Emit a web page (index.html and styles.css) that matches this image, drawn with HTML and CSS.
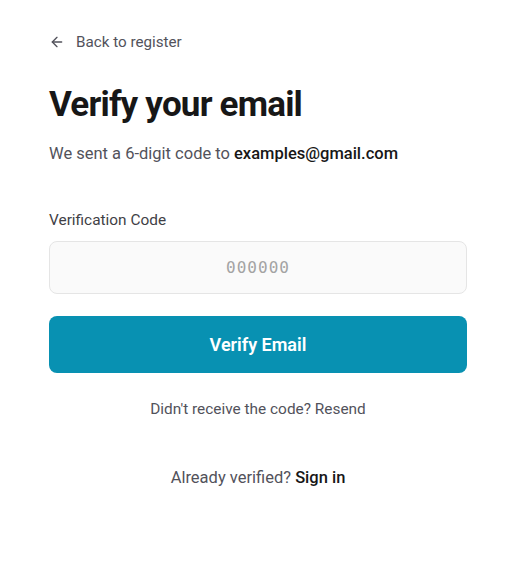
FILE: index.html
```html
<!DOCTYPE html>
<html>
<head>
<meta charset="utf-8">
<link rel="stylesheet" href="styles.css">
</head>
<body>
<main class="page">
  <a class="back" href="#">
    <svg class="back-icon" width="16" height="16" viewBox="0 0 24 24" fill="none" stroke="currentColor" stroke-width="2" stroke-linecap="round" stroke-linejoin="round"><path d="M19 12H5"/><path d="M12 19l-7-7 7-7"/></svg>
    <span>Back to register</span>
  </a>
  <h1 class="title">Verify your email</h1>
  <p class="subtitle">We sent a 6-digit code to <strong>examples@gmail.com</strong></p>
  <form class="form">
    <label class="label" for="code">Verification Code</label>
    <input class="code-input" id="code" type="text" placeholder="000000">
    <button class="btn" type="button">Verify Email</button>
  </form>
  <p class="resend">Didn't receive the code? Resend</p>
  <p class="signin">Already verified? <strong>Sign in</strong></p>
</main>
</body>
</html>
```
FILE: styles.css
```css
* { box-sizing: border-box; }
html, body { margin: 0; background: #fff; }
body { font-family: Roboto, "Noto Sans", sans-serif; color: #171717; }
.page {
  width: 418px;
  margin-left: 49px;
  padding-top: 32px;
  display: flex;
  flex-direction: column;
}
.back {
  display: flex;
  align-items: center;
  gap: 11px;
  color: #52525b;
  text-decoration: none;
  font-size: 15.2px;
  line-height: 20px;
}
.back-icon { display: block; }
.title {
  margin: 31px 0 0;
  font-size: 35px;
  line-height: 44px;
  font-weight: 700;
  color: #171717;
  letter-spacing: -0.8px;
}
.subtitle {
  margin: 15px 0 0;
  font-size: 16.5px;
  line-height: 24px;
  color: #52525b;
}
.subtitle strong { color: #171717; font-weight: 500; }
.form { display: flex; flex-direction: column; margin-top: 44px; }
.label {
  font-size: 15.4px;
  line-height: 20px;
  color: #3f3f46;
}
.code-input {
  margin-top: 11px;
  height: 53px;
  border: 1px solid #e5e5e5;
  border-radius: 8px;
  background: #fafafa;
  text-align: center;
  font-family: "DejaVu Sans Mono", monospace;
  font-size: 16px;
  letter-spacing: 1px;
  color: #171717;
  outline: none;
}
.code-input::placeholder { color: #a3a3a3; }
.btn {
  margin-top: 22px;
  height: 57px;
  border: 0;
  border-radius: 8px;
  background: #0891b2;
  color: #fff;
  font-family: Roboto, sans-serif;
  font-size: 18px;
  font-weight: 600;
}
.resend {
  margin: 26px 0 0;
  text-align: center;
  font-size: 15.4px;
  line-height: 20px;
  color: #52525b;
}
.signin {
  margin: 47px 0 0;
  text-align: center;
  font-size: 16.5px;
  line-height: 24px;
  color: #52525b;
}
.signin strong { color: #171717; font-weight: 500; }
```
